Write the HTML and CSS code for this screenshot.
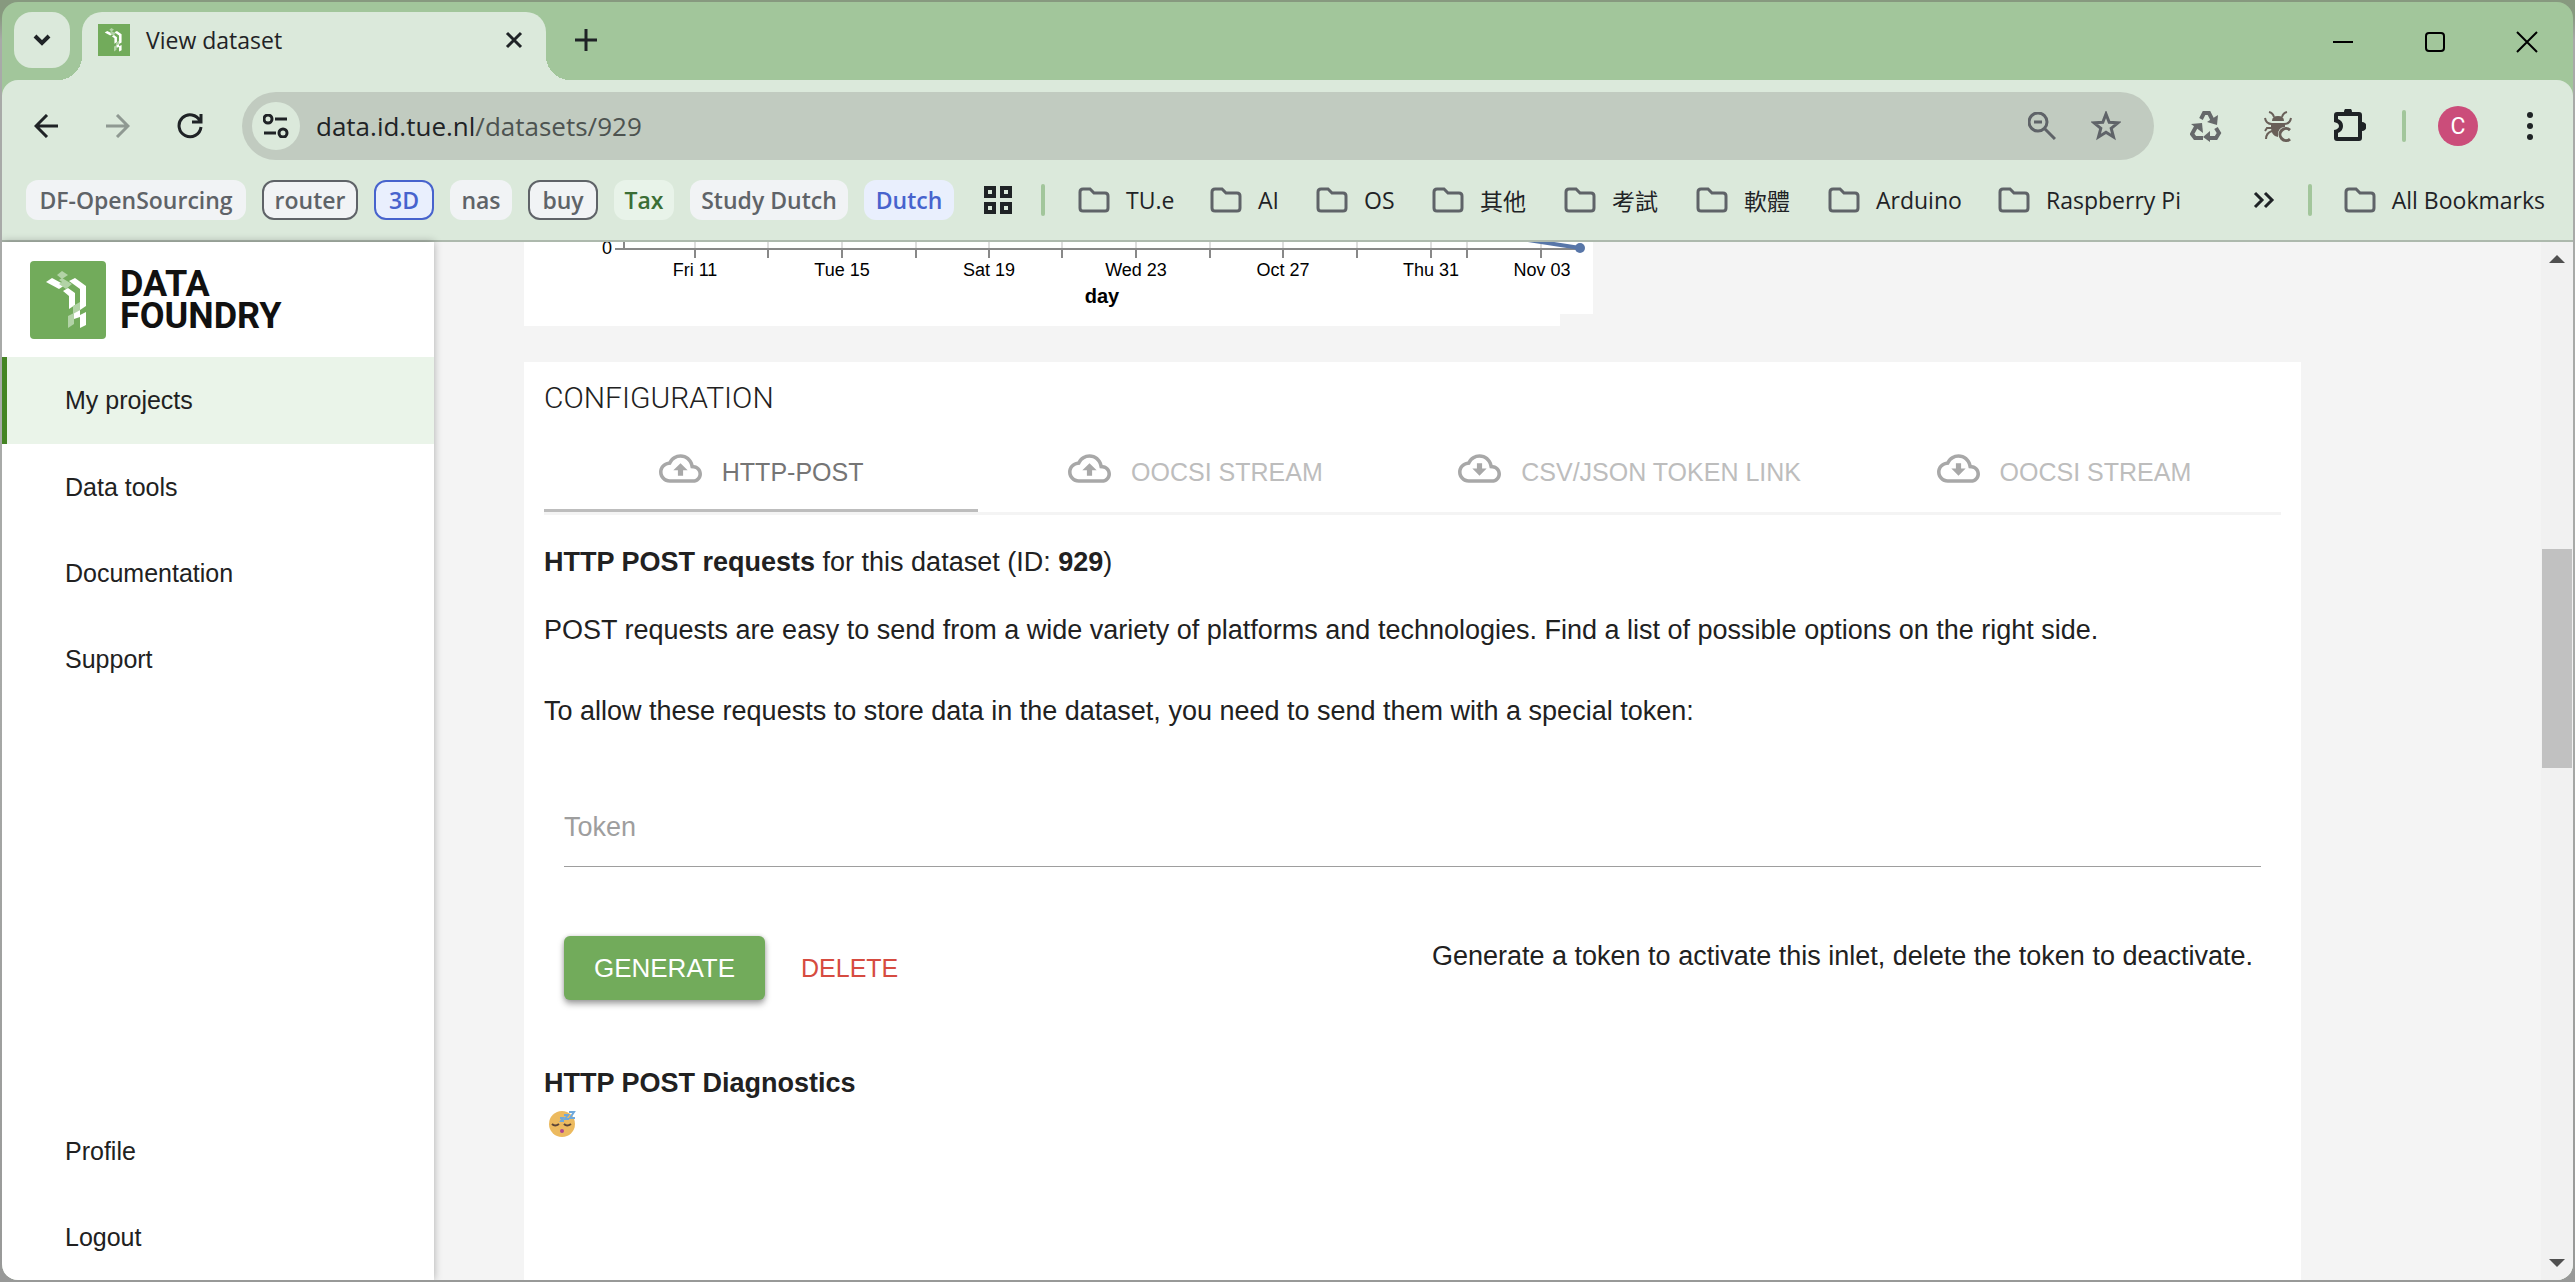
FILE: index.html
```html
<!DOCTYPE html>
<html lang="en">
<head>
<meta charset="utf-8">
<title>View dataset</title>
<link rel="stylesheet" href="styles.css">
</head>
<body>
<svg class="sprite" aria-hidden="true">
  <symbol id="folder" viewBox="0 0 32 26"><path d="M2 21V5Q2 2 5 2h7l4 4h11q3 0 3 3v12q0 3-3 3H5q-3 0-3-3z" fill="none" stroke="#5f6368" stroke-width="3"/></symbol>
  <symbol id="cloud-up" viewBox="0 4 24 16"><path d="M19.35 10.04C18.67 6.59 15.64 4 12 4 9.11 4 6.6 5.64 5.35 8.04 2.34 8.36 0 10.91 0 14c0 3.31 2.69 6 6 6h13c2.76 0 5-2.24 5-5 0-2.64-2.05-4.78-4.65-4.96zM19 18H6c-2.21 0-4-1.79-4-4 0-2.05 1.53-3.76 3.56-3.97l1.07-.11.5-.95C8.08 7.14 9.94 6 12 6c2.62 0 4.88 1.86 5.39 4.43l.3 1.5 1.53.11c1.56.1 2.78 1.41 2.78 2.96 0 1.65-1.35 3-3 3zM8 13h2.55v3h2.9v-3H16l-4-4z"/></symbol>
  <symbol id="cloud-down" viewBox="0 4 24 16"><path d="M19.35 10.04C18.67 6.59 15.64 4 12 4 9.11 4 6.6 5.64 5.35 8.04 2.34 8.36 0 10.91 0 14c0 3.31 2.69 6 6 6h13c2.76 0 5-2.24 5-5 0-2.64-2.05-4.78-4.65-4.96zM19 18H6c-2.21 0-4-1.79-4-4 0-2.05 1.53-3.76 3.56-3.97l1.07-.11.5-.95C8.08 7.14 9.94 6 12 6c2.62 0 4.88 1.86 5.39 4.43l.3 1.5 1.53.11c1.56.1 2.78 1.41 2.78 2.96 0 1.65-1.35 3-3 3zM13.45 12v-3h-2.9v3H8l4 4 4-4z"/></symbol>
  <symbol id="mark" viewBox="0 0 76 78">
    <rect width="76" height="78" rx="4" fill="#72ab5b"/>
    <path d="M27 14l5-4 6 4-6 4z" fill="#b2d3a6"/>
    <path d="M16 21l6-4 13 7-6 4z" fill="#fff"/>
    <path d="M29 19l3-2 10 6-6 5-7-5 3-2z" fill="#b2d3a6"/>
    <path d="M39 20l6-3 11 8v20l-6 4V28z" fill="#fff"/>
    <path d="M33 30l5-3 7 5v12l-6 4V35z" fill="#fff"/>
    <path d="M43 45l7-4v8l-7 5z" fill="#b2d3a6"/>
    <path d="M43 53l7-4v5l6-3v13l-6 3V56l-6 2z" fill="#fff"/>
    <path d="M38 55l6-3v11l-6 4z" fill="#b2d3a6"/>
  </symbol>
</svg>

<div class="window">
  <div class="titlebar">
    <button class="tab-search" aria-label="Search tabs"><svg width="18" height="12" viewBox="0 0 18 12"><path d="M2 2l7 7 7-7" class="ink thick"/></svg></button>
    <div class="browser-tab">
      <svg class="favicon" width="32" height="32" viewBox="0 0 76 78" preserveAspectRatio="none"><rect width="76" height="78" fill="#72ab5b"/><use href="#mark" width="76" height="78"/></svg>
      <span class="tab-title">View dataset</span>
      <button class="tab-close" aria-label="Close tab"><svg width="18" height="18" viewBox="0 0 18 18"><path d="M2 2l14 14M16 2L2 16" class="ink"/></svg></button>
    </div>
    <button class="new-tab" aria-label="New tab"><svg width="22" height="22" viewBox="0 0 22 22"><path d="M11 0v22M0 11h22" class="ink"/></svg></button>
    <div class="window-controls">
      <button aria-label="Minimize"><svg width="20" height="20" viewBox="0 0 20 20"><path d="M0 10h20" class="hair"/></svg></button>
      <button aria-label="Maximize"><svg width="20" height="20" viewBox="0 0 20 20"><rect x="1" y="1" width="18" height="18" rx="3" class="hair"/></svg></button>
      <button aria-label="Close"><svg width="22" height="22" viewBox="0 0 22 22"><path d="M1 1l20 20M21 1L1 21" class="hair"/></svg></button>
    </div>
  </div>

  <div class="chrome">
    <div class="toolbar">
      <button class="tool" aria-label="Back"><svg width="24" height="24" viewBox="0 0 24 24"><path d="M24 12H2M13 1L2 12l11 11" class="ink"/></svg></button>
      <button class="tool faded" aria-label="Forward"><svg width="24" height="24" viewBox="0 0 24 24"><path d="M0 12h22M11 1l11 11-11 11" class="ink"/></svg></button>
      <button class="tool" aria-label="Reload"><svg width="26" height="26" viewBox="0 0 26 26"><path d="M23 8A11 11 0 1 0 24 14M24 1v8h-9" class="ink"/></svg></button>
      <div class="omnibox">
        <button class="site-info" aria-label="View site information"><svg width="26" height="24" viewBox="0 0 26 24"><g class="ink"><circle cx="5" cy="5" r="4"/><path d="M12 5h12M1 19h12"/><circle cx="20" cy="19" r="4"/></g></svg></button>
        <span class="url">data.id.tue.nl<span class="path">/datasets/929</span></span>
        <button class="omni-btn" aria-label="Zoom"><svg width="28" height="28" viewBox="0 0 28 28"><g class="grey"><circle cx="10" cy="10" r="9"/><path d="M6 10h8M17 17l10 10"/></g></svg></button>
        <button class="omni-btn" aria-label="Bookmark this tab"><svg width="30" height="30" viewBox="0 0 30 30"><path d="M15 3l3.200 8.200 8.800.6-6.800 5.600 2.300 8.600-7.500-4.800L7.500 26l2.300-8.600L3 11.800l8.800-.6z" class="grey"/></svg></button>
      </div>
      <div class="extensions">
        <button class="tool" aria-label="Recycle"><svg width="32" height="32" viewBox="0 0 32 32"><g fill="none" stroke="#66696a" stroke-width="4"><path d="M11 9l3-6h5l4 8"/><path d="M26 18l3 5-3 5h-8"/><path d="M13 28H5l-3-4 5-9"/></g><g fill="#66696a"><path d="M17 12l10 3 1-10z"/><path d="M20 21v11l-7-5z"/><path d="M1 14l11-1 1 10z"/></g></svg></button>
        <button class="tool" aria-label="Bug report"><svg width="28" height="32" viewBox="0 0 28 32"><g fill="#695f58"><path d="M8 11q0-5 6-5t6 5zM7 13h14v4q-7 0-7 8v2q-7-1-7-10z"/></g><g fill="none" stroke="#695f58" stroke-width="2"><path d="M10 7Q9 3 5 2M18 7q1-4 5-5M8 14Q2 14 1 8M20 14q6 0 7-6M8 18H3l-2 3M8 21q-6 2-6 8"/><path d="M26 20a6 6 0 1 0 0 9" stroke-width="3"/></g></svg></button>
        <button class="tool" aria-label="Extensions"><svg width="32" height="34" viewBox="0 0 32 34"><path d="M0 6q0-3 3-3h7a4 4 0 0 1 8 0h7q3 0 3 3v7a4 4 0 0 1 0 9v7q0 3-3 3H3q-3 0-3-3v-8q5-1 5-4t-5-4z" fill="#1f2326"/><path d="M4 7h20v21H4v-4q5-2 5-7t-5-7z" fill="#dbe9db"/></svg></button>
      </div>
      <span class="divider"></span>
      <button class="avatar" aria-label="Profile C">C</button>
      <button class="tool" aria-label="Menu"><svg width="8" height="28" viewBox="0 0 8 28"><g fill="#1f2326"><circle cx="4" cy="3" r="3"/><circle cx="4" cy="14" r="3"/><circle cx="4" cy="25" r="3"/></g></svg></button>
    </div>

    <div class="bookmarks">
      <div class="chips">
        <button class="chip">DF-OpenSourcing</button>
        <button class="chip outlined">router</button>
        <button class="chip blue outlined">3D</button>
        <button class="chip">nas</button>
        <button class="chip outlined">buy</button>
        <button class="chip green">Tax</button>
        <button class="chip">Study Dutch</button>
        <button class="chip blue">Dutch</button>
      </div>
      <button class="apps" aria-label="Apps"><svg width="30" height="28" viewBox="0 0 30 28"><path d="M3 2h8v8H3zM19 2h8v8h-8zM3 18h8v8H3zM19 18h8v8h-8z" class="ink thick"/></svg></button>
      <span class="divider"></span>
      <div class="folders">
        <a class="folder" href="#"><svg width="32" height="26"><use href="#folder"/></svg>TU.e</a>
        <a class="folder" href="#"><svg width="32" height="26"><use href="#folder"/></svg>AI</a>
        <a class="folder" href="#"><svg width="32" height="26"><use href="#folder"/></svg>OS</a>
        <a class="folder" href="#" lang="zh-Hant"><svg width="32" height="26"><use href="#folder"/></svg>其他</a>
        <a class="folder" href="#" lang="zh-Hant"><svg width="32" height="26"><use href="#folder"/></svg>考試</a>
        <a class="folder" href="#" lang="zh-Hant"><svg width="32" height="26"><use href="#folder"/></svg>軟體</a>
        <a class="folder" href="#"><svg width="32" height="26"><use href="#folder"/></svg>Arduino</a>
        <a class="folder" href="#"><svg width="32" height="26"><use href="#folder"/></svg>Raspberry Pi</a>
      </div>
      <button class="more" aria-label="More bookmarks"><svg width="22" height="18" viewBox="0 0 22 18"><path d="M2 2l7 7-7 7M12 2l7 7-7 7" class="ink"/></svg></button>
      <span class="divider"></span>
      <a class="folder all" href="#"><svg width="32" height="26"><use href="#folder"/></svg>All Bookmarks</a>
    </div>
  </div>

  <div class="page">
    <aside class="sidebar">
      <a class="brand" href="#"><svg width="76" height="78"><use href="#mark"/></svg><span>DATA<br>FOUNDRY</span></a>
      <nav class="nav">
        <a class="active" href="#">My projects</a>
        <a href="#">Data tools</a>
        <a href="#">Documentation</a>
        <a href="#">Support</a>
        <a class="push" href="#">Profile</a>
        <a href="#">Logout</a>
      </nav>
    </aside>

    <main class="main">
      <section class="chart-card">
        <svg class="chart" width="1069" height="72" viewBox="0 0 1069 72" role="img" aria-label="Entries per day">
          <rect width="1069" height="72" fill="#fff"/>
          <path d="M171 0v6M244 0v6M318 0v6M392 0v6M465 0v6M538 0v6M612 0v6M686 0v6M759 0v6M833 0v6M907 0v6M943 0v6M1017 0v6" stroke="#ddd" stroke-width="2"/>
          <path d="M91 7h964M100 0v7M171 7v9M244 7v9M318 7v9M392 7v9M465 7v9M538 7v9M612 7v9M686 7v9M759 7v9M833 7v9M907 7v9M943 7v9M1017 7v9" stroke="#888" stroke-width="2" fill="none"/>
          <path d="M1004 -2l52 8" stroke="#5876a8" stroke-width="4"/>
          <circle cx="1056" cy="6" r="5" fill="#5876a8"/>
          <g class="ticks">
            <text x="83" y="12">0</text>
            <text x="171" y="34">Fri 11</text>
            <text x="318" y="34">Tue 15</text>
            <text x="465" y="34">Sat 19</text>
            <text x="612" y="34">Wed 23</text>
            <text x="759" y="34">Oct 27</text>
            <text x="907" y="34">Thu 31</text>
            <text x="1018" y="34">Nov 03</text>
            <text class="axis-title" x="578" y="61">day</text>
          </g>
        </svg>
      </section>

      <section class="card">
        <h2>CONFIGURATION</h2>
        <div class="tabs" role="tablist">
          <button class="tab selected" role="tab"><svg width="43" height="29"><use href="#cloud-up"/></svg><span>HTTP-POST</span></button>
          <button class="tab" role="tab"><svg width="43" height="29"><use href="#cloud-up"/></svg><span>OOCSI STREAM</span></button>
          <button class="tab" role="tab"><svg width="43" height="29"><use href="#cloud-down"/></svg><span>CSV/JSON TOKEN LINK</span></button>
          <button class="tab" role="tab"><svg width="43" height="29"><use href="#cloud-down"/></svg><span>OOCSI STREAM</span></button>
        </div>
        <p class="intro"><b>HTTP POST requests</b> for this dataset (ID: <b>929</b>)</p>
        <p>POST requests are easy to send from a wide variety of platforms and technologies. Find a list of possible options on the right side.</p>
        <p class="note">To allow these requests to store data in the dataset, you need to send them with a special token:</p>
        <form class="token-form">
          <input type="text" placeholder="Token" aria-label="Token">
          <div class="actions">
            <button type="button" class="generate">GENERATE</button>
            <button type="button" class="delete">DELETE</button>
            <p class="hint">Generate a token to activate this inlet, delete the token to deactivate.</p>
          </div>
        </form>
        <h3>HTTP POST Diagnostics</h3>
        <div class="status">
          <svg width="28" height="28" viewBox="0 0 28 28" role="img" aria-label="Sleeping"><circle cx="14" cy="14" r="13" fill="#ecba5f"/><g fill="none" stroke="#5b4437" stroke-width="2"><path d="M4 14q3 3 7 0M16 14q3 3 7 0"/></g><ellipse cx="14" cy="21" rx="2" ry="2" fill="#b0458c"/><g fill="none" stroke="#6fa9dc" stroke-width="2"><path d="M21 2h5l-4 6h5M16 5h4l-3 4h4M12 8h3l-2 3h3"/></g></svg>
        </div>
      </section>
    </main>

    <div class="scrollbar" aria-hidden="true">
      <span class="arrow"><svg width="16" height="8" viewBox="0 0 16 8"><path d="M0 8l8-8 8 8z"/></svg></span>
      <span class="before"></span>
      <span class="thumb"></span>
      <span class="after"></span>
      <span class="arrow"><svg width="16" height="8" viewBox="0 0 16 8"><path d="M0 0l8 8 8-8z"/></svg></span>
    </div>
  </div>
</div>
</body>
</html>
```
FILE: styles.css
```css
* { box-sizing: border-box; }

body {
  margin: 0;
  height: 100vh;
  padding: 2px;
  overflow: hidden;
  background: linear-gradient(#87997f 0, #87997f 16px, #a8aaa8 40px, #a8aaa8 50%, #989998 100%);
  font-family: "Liberation Sans", Arial, sans-serif;
  color: #212121;
}

button {
  margin: 0;
  padding: 0;
  border: 0;
  background: none;
  font: inherit;
  color: inherit;
  display: flex;
  align-items: center;
  justify-content: center;
}

a { color: inherit; text-decoration: none; }
svg { display: block; flex: none; }
.sprite { position: absolute; width: 0; height: 0; }

.ink { fill: none; stroke: #1f2326; stroke-width: 3; }
.thick { stroke-width: 4; }
.grey { fill: none; stroke: #5f6368; stroke-width: 3; }
.hair { fill: none; stroke: #000; stroke-width: 2; }

/* Browser window */
.window {
  height: 100%;
  display: flex;
  flex-direction: column;
  border-radius: 16px;
  overflow: hidden;
  background: #a2c69b;
  font-size: 27px;
}

.titlebar {
  display: flex;
  height: 78px;
  padding: 10px 0 0 12px;
  font-family: "Open Sans", "Noto Sans", sans-serif;
  font-size: 23px;
  color: #1f2326;
}
.tab-search {
  width: 56px;
  height: 56px;
  margin-right: 12px;
  border-radius: 18px;
  background: #dbe9db;
}
.browser-tab {
  position: relative;
  display: flex;
  align-items: center;
  width: 464px;
  padding: 0 20px 12px 16px;
  border-radius: 20px 20px 0 0;
  background: #dbe9db;
}
.browser-tab::before,
.browser-tab::after {
  content: "";
  position: absolute;
  bottom: 0;
  width: 24px;
  height: 24px;
}
.browser-tab::before { right: 100%; background: radial-gradient(circle at 0 0, transparent 24px, #dbe9db 24px); }
.browser-tab::after { left: 100%; background: radial-gradient(circle at 100% 0, transparent 24px, #dbe9db 24px); }
.tab-title { flex: 1; padding-left: 16px; }
.tab-close { width: 24px; height: 24px; }
.new-tab { width: 56px; height: 56px; margin-left: 12px; }
.window-controls { display: flex; margin-left: auto; }
.window-controls button { width: 92px; height: 60px; }

.chrome {
  background: #dbe9db;
  border-radius: 16px 16px 0 0;
  border-bottom: 2px solid #adb9ad;
  font-family: "Open Sans", "Noto Sans", "Noto Sans CJK TC", sans-serif;
  font-size: 23px;
  color: #1f2326;
}
.toolbar {
  display: flex;
  align-items: center;
  height: 92px;
  padding: 0 7px 0 8px;
}
.tool { width: 72px; height: 68px; }
.faded { opacity: .4; }
.omnibox {
  flex: 1;
  display: flex;
  align-items: center;
  height: 68px;
  margin: 0 16px;
  padding: 0 16px 0 10px;
  border-radius: 34px;
  background: #c1cbc0;
  font-size: 26px;
}
.site-info {
  width: 48px;
  height: 48px;
  border-radius: 50%;
  background: #dbe9db;
}
.url { flex: 1; padding-left: 16px; }
.path { color: #4d5350; }
.omni-btn { width: 64px; height: 64px; }
.extensions { display: flex; }
.divider {
  width: 4px;
  height: 32px;
  border-radius: 2px;
  background: #a2c69b;
}
.toolbar .divider { margin: 0 32px 0 16px; }
.avatar {
  width: 40px;
  height: 40px;
  margin-right: 16px;
  border-radius: 50%;
  background: #cb4d7a;
  color: #fff;
  font-family: Roboto, sans-serif;
}

.bookmarks {
  display: flex;
  align-items: center;
  height: 68px;
  padding: 0 28px 12px 24px;
}
.chips {
  display: grid;
  grid-template-columns: 220px 96px 60px 62px 70px 60px 158px 90px;
  gap: 16px;
}
.chip {
  height: 40px;
  border-radius: 12px;
  background: #f1f3f5;
  color: #5f6368;
  font-weight: 600;
  white-space: nowrap;
}
.outlined { border: 2px solid currentColor; }
.blue { background: #e9effd; color: #4763cd; }
.green { background: #e8f3e9; color: #3a6e35; }
.apps { margin: 0 28px 0 29px; }
.folders {
  display: grid;
  grid-template-columns: 96px 70px 80px 96px 96px 96px 134px 180px;
  gap: 36px;
  margin: 0 auto 0 33px;
}
.folder {
  display: flex;
  align-items: center;
  gap: 16px;
  white-space: nowrap;
}
.more { margin-right: 33px; }
.all { margin-left: 32px; }

/* Data Foundry page */
.page {
  flex: 1;
  display: flex;
  min-height: 0;
  background: #f4f4f4;
}
.sidebar {
  display: flex;
  flex-direction: column;
  width: 432px;
  background: #fff;
  box-shadow: 0 0 8px rgba(0, 0, 0, .3);
}
.brand {
  display: flex;
  align-items: center;
  gap: 14px;
  height: 115px;
  padding-left: 28px;
  font-family: Roboto, sans-serif;
  font-weight: 700;
  font-size: 36px;
  line-height: 32px;
  color: #111;
}
.nav {
  flex: 1;
  display: flex;
  flex-direction: column;
  font-size: 25px;
}
.nav a {
  display: flex;
  align-items: center;
  height: 86px;
  padding-left: 58px;
  border-left: 5px solid transparent;
}
.nav a.active { height: 87px; background: #eaf4e9; border-color: #458424; }
.nav .push { margin-top: auto; }

.main {
  flex: 1;
  display: flex;
  flex-direction: column;
  padding: 0 240px 0 90px;
  overflow: hidden;
}
.chart-card {
  width: 1036px;
  margin-bottom: 36px;
  padding-bottom: 12px;
  background: #fff;
}
.chart { overflow: visible; }
.ticks { font-size: 18px; text-anchor: middle; fill: #000; }
.axis-title { font-size: 20px; font-weight: 700; }

.card {
  flex: 1;
  padding: 16px 20px 0;
  background: #fff;
}
h2 {
  margin: 0 0 10px;
  font-family: Roboto, sans-serif;
  font-weight: 300;
  font-size: 30px;
  line-height: 40px;
}
.tabs {
  display: grid;
  grid-template-columns: repeat(4, 1fr);
  border-bottom: 3px solid #f4f4f4;
}
.tab {
  gap: 20px;
  height: 84px;
  border-bottom: 3px solid transparent;
  font-size: 25px;
  color: #bdbdbd;
}
.tab span { padding-top: 8px; }
.tab svg { fill: #a8a8a8; }
.selected { border-color: #bdbdbd; color: #757575; }
p { margin: 0; line-height: 41px; }
.intro { margin: 27px 0; }
.note { margin-top: 40px; }
.token-form { padding: 55px 20px 63px; }
input {
  display: block;
  width: 100%;
  height: 80px;
  padding: 2px 0 0;
  border: 0;
  border-bottom: 1px solid #9e9e9e;
  background: none;
  font: inherit;
}
input::placeholder { color: #9e9e9e; }
.actions {
  display: flex;
  align-items: flex-start;
  gap: 16px;
  padding: 69px 8px 0 0;
}
.actions button { height: 64px; }
.actions .generate {
  width: 201px;
  border-radius: 6px;
  background: #72ab5b;
  color: #fff;
  font-size: 26px;
  box-shadow: 0 4px 6px rgba(0, 0, 0, .35), 0 0 4px rgba(0, 0, 0, .15);
}
.actions .delete { padding: 0 20px; font-size: 25px; color: #d64b40; }
.hint { margin-left: auto; }
h3 { margin: 0; font-size: 27px; line-height: 41px; }
.status { padding: 6px 4px; }

.scrollbar {
  display: flex;
  flex-direction: column;
  width: 32px;
  padding: 0 1px;
  background: #f1f1f1;
}
.arrow {
  display: flex;
  align-items: center;
  justify-content: center;
  height: 34px;
  fill: #505050;
}
.before { flex: 273; }
.thumb { flex: 219; background: #c1c1c1; }
.after { flex: 478; }
```
